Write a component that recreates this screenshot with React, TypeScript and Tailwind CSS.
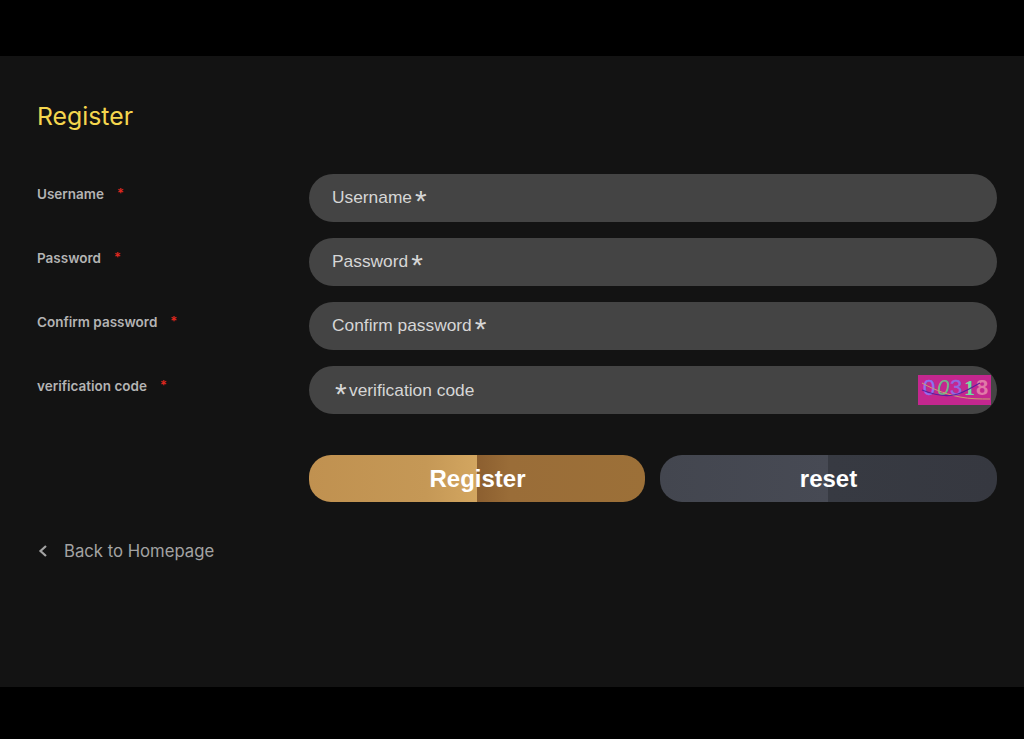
const fields = ['Username', 'Password', 'Confirm password'];

function Star() {
  return <span className="relative top-[-1px] mx-[3px] h-[20px] w-[11px] font-['Liberation_Sans',sans-serif] text-[30px] leading-[30px]">*</span>;
}

function Captcha() {
  return (
    <svg viewBox="0 0 73 30" className="absolute top-[9px] right-[6px] h-[30px] w-[73px] bg-[#c4278f]">
      <text x="5" y="20" fontFamily="Liberation Sans" fontSize="22" stroke="#8a72f0" strokeWidth="0.3" fill="#8a72f0">0</text>
      <text x="19" y="20" fontFamily="Liberation Sans" fontSize="22" fontStyle="italic" fill="#6fb98a">0</text>
      <text x="32" y="20" fontFamily="Liberation Sans" fontSize="22" stroke="#8f6ae0" strokeWidth="0.3" fill="#8f6ae0">3</text>
      <text x="46" y="20" fontFamily="Liberation Serif" fontWeight="700" fontSize="22" fill="#6fe0a0">1</text>
      <text x="58" y="20" fontFamily="Liberation Sans" fontWeight="700" fontSize="22" fill="#e07aa8">8</text>
      <path d="M4 8C18 16 32 20 42 22C52 24 62 24 72 24" stroke="#c9a070" strokeWidth="1" fill="none" />
      <path d="M4 15C14 19 26 22 36 20C46 18 54 12 62 8" stroke="#5a1fa0" strokeWidth="1.2" fill="none" />
    </svg>
  );
}

function Label({ text }: { text: string }) {
  return (
    <label className="flex h-[40px] w-[272px] items-center text-[13.5px] font-semibold text-[#b4b4b4]">
      {text}
      <span className="ml-[13px] text-[13px] text-[#e0281f]">*</span>
    </label>
  );
}

export default function App() {
  return (
    <div className="flex h-[739px] w-full flex-col bg-black font-['Inter',sans-serif]">
      <div className="h-[56px] shrink-0" />
      <main className="h-[631px] bg-[#131313] pt-[44px] pr-[27px] pl-[37px]">
        <h1 className="text-[24.8px] leading-[32px] font-normal text-[#f5d64e]">Register</h1>

        <div className="mt-[42px] flex flex-col gap-[16px]">
          {fields.map((f) => (
            <div key={f} className="flex">
              <Label text={f} />
              <div className="flex h-[48px] flex-1 items-center rounded-full bg-[#444444] pb-[2px] pl-[23px] font-['Liberation_Sans',sans-serif] text-[17.35px] text-[#d6d6d6]">
                {f}
                <Star />
              </div>
            </div>
          ))}
          <div className="flex">
            <Label text="verification code" />
            <div className="relative flex h-[48px] flex-1 items-center rounded-full bg-[#444444] pl-[23px] font-['Liberation_Sans',sans-serif] text-[17.35px] text-[#d6d6d6]">
              <Star />
              verification code
              <Captcha />
            </div>
          </div>
        </div>

        <div className="mt-[41px] ml-[272px] flex gap-[15px]">
          <button
            type="button"
            className="h-[47px] w-[336px] rounded-[22px] bg-[linear-gradient(90deg,#c09150_0%,#c59856_35%,#d3a660_50%,#8c5f30_50%,#9a6d38_60%,#9c7038_100%)] pl-[1px] font-['Liberation_Sans',sans-serif] text-[24px] font-bold text-white"
          >
            Register
          </button>
          <button
            type="button"
            className="h-[47px] flex-1 rounded-[22px] bg-[linear-gradient(90deg,#43464f_0%,#474a54_50%,#373a42_50%,#363840_100%)] font-['Liberation_Sans',sans-serif] text-[24px] font-bold text-white"
          >
            reset
          </button>
        </div>

        <div className="mt-[37px] flex items-center text-[16.7px] leading-[24px] text-[#a3a3a3]">
          <svg viewBox="0 0 12 14" className="h-[14px] w-[12px]" fill="none" stroke="#a3a3a3" strokeWidth="2.2">
            <path d="M9 2L3.5 7L9 12" />
          </svg>
          <span className="ml-[15px]">Back to Homepage</span>
        </div>
      </main>
    </div>
  );
}
